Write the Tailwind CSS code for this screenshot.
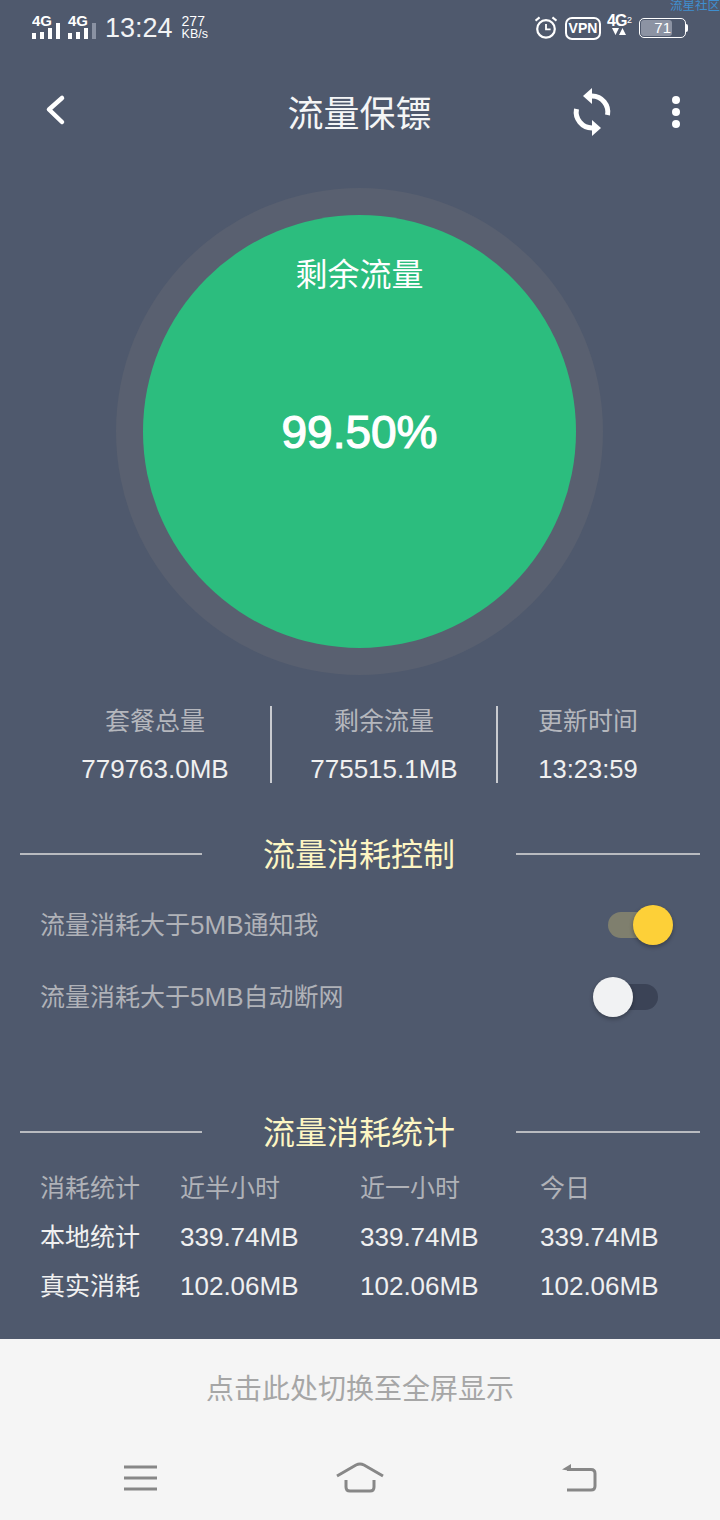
<!DOCTYPE html>
<html lang="zh">
  <head>
    <meta charset="UTF-8" />
    <title>流量保镖</title>
    <script src="https://cdn.jsdelivr.net/npm/@tailwindcss/browser@4"></script>
  </head>
  <body class="w-[720px] h-[1520px] overflow-hidden bg-[#4f596d] font-['Liberation_Sans','Noto_Sans_CJK_SC',sans-serif] text-white flex flex-col">
    <!-- status bar -->
    <div class="relative h-[54px] shrink-0 flex items-center pl-[32px] pr-[32px] pt-[2px]">
      <div class="text-[12.5px] text-[#3f8fd0] absolute right-0 top-[-1px] leading-[14px]">流星社区</div>
      <svg width="64" height="36" viewBox="0 -4 64 36" fill="#fff">
        <text x="0" y="12" font-size="15" font-weight="700" font-family="Liberation Sans">4G</text>
        <rect x="0" y="19" width="4" height="6" /><rect x="8" y="18" width="4" height="7" /><rect x="16" y="14" width="4" height="11" /><rect x="24" y="9" width="4" height="16" />
        <text x="36" y="12" font-size="15" font-weight="700" font-family="Liberation Sans">4G</text>
        <rect x="36" y="19" width="4" height="6" /><rect x="44" y="18" width="4" height="7" /><rect x="52" y="14" width="4" height="11" /><rect x="60" y="9" width="4" height="16" fill="#8a92a3" />
      </svg>
      <span class="ml-[9px] text-[27px] leading-none text-[#f2f3f5]">13:24</span>
      <div class="ml-[9px] flex flex-col text-[12.5px] leading-[13px]"><span class="text-[14px]">277</span><span>KB/s</span></div>
      <div class="ml-auto flex items-center">
        <svg width="22" height="24" viewBox="1 1 24 26" fill="none" stroke="#fff" stroke-width="2.400">
          <circle cx="13" cy="15" r="9.600" /><path d="M13 9.500v6h5" stroke-width="2" /><path d="M1.500 6 6 2.500M24.500 6 20 2.500" />
        </svg>
        <div class="ml-[8px] w-[36px] h-[23px] rounded-[7px] border-2 border-white flex items-center justify-center text-[14px] font-bold">VPN</div>
        <div class="ml-[6px] relative w-[24px] h-[28px]">
          <span class="absolute left-0 top-[-3px] text-[16px] font-bold leading-[20px] tracking-[-1px]">4G</span>
          <span class="absolute right-[-1px] top-[1px] text-[9px] leading-[10px]">2</span>
          <svg class="absolute left-[5px] top-[14px]" width="14" height="7" viewBox="0 0 14 7" fill="#fff"><path d="M0 0h7L3.500 7zM7 7h7L10.500 0z" /></svg>
        </div>
        <div class="ml-[8px] w-[47px] h-[20px] rounded-[5px] border-[1.5px] border-white p-[1px] flex">
          <div class="w-[31px] rounded-[3px] bg-[#8c93a3] flex items-center justify-end pr-[1px] text-[15px]">71</div>
        </div>
        <div class="w-[2px] h-[8px] bg-white rounded-r-sm"></div>
      </div>
    </div>

    <!-- title bar -->
    <div class="relative h-[118px] shrink-0 flex items-center justify-center pt-[3px]">
      <svg class="absolute left-[44px] top-[40px]" width="24" height="32" viewBox="0 0 24 32" fill="none" stroke="#fff" stroke-width="4.500" stroke-linecap="round" stroke-linejoin="round"><path d="M18 4 5 15.500 18 28" /></svg>
      <span class="text-[36px] leading-none text-[#f4f5f6] ml-[-1px]">流量保镖</span>
      <svg class="absolute left-[571px] top-[32px]" width="42" height="52" viewBox="0 0 42 52" fill="none" stroke="#fff" stroke-width="5">
        <path d="M21 10A16 16 0 0 1 36.500 29" /><path d="M21 42A16 16 0 0 1 5.500 23" />
        <path d="M21 2V18L12 10z" fill="#fff" stroke="none" /><path d="M21 34V50L30 42z" fill="#fff" stroke="none" />
      </svg>
      <div class="absolute left-[672px] top-[42px] flex flex-col gap-[4px]">
        <div class="w-[8px] h-[8px] rounded-full bg-white"></div><div class="w-[8px] h-[8px] rounded-full bg-white"></div><div class="w-[8px] h-[8px] rounded-full bg-white"></div>
      </div>
    </div>

    <!-- gauge -->
    <div class="mt-[16px] ml-[116px] w-[487px] h-[487px] shrink-0 rounded-full bg-[#596070] flex items-center justify-center">
      <div class="relative w-[433px] h-[433px] rounded-full bg-[#2cbd7e] flex items-center justify-center">
        <div class="absolute top-[41px] left-0 right-0 text-center text-[32px] leading-[38px]">剩余流量</div>
        <div class="text-[46px] leading-none [-webkit-text-stroke:1.2px_white]">99.50%</div>
      </div>
    </div>

    <!-- totals -->
    <div class="mt-[31px] h-[77px] shrink-0 flex text-center text-[25px] text-[#f0f0f0]">
      <div class="w-[270px] flex flex-col items-center pl-[40px]">
        <span class="text-[#b5b7bd] leading-[30px]">套餐总量</span><span class="mt-[18px] leading-[30px] text-[26px]">779763.0MB</span>
      </div>
      <div class="w-[2px] bg-[#c9cbd0]"></div>
      <div class="w-[224px] flex flex-col items-center">
        <span class="text-[#b5b7bd] leading-[30px]">剩余流量</span><span class="mt-[18px] leading-[30px] text-[26px]">775515.1MB</span>
      </div>
      <div class="w-[2px] bg-[#c9cbd0]"></div>
      <div class="w-[180px] flex flex-col items-center">
        <span class="text-[#b5b7bd] leading-[30px]">更新时间</span><span class="mt-[18px] leading-[30px] text-[25.500px]">13:23:59</span>
      </div>
    </div>

    <!-- consumption control -->
    <div class="mt-[52px] h-[40px] shrink-0 flex items-center pl-[20px] pr-[20px]">
      <div class="w-[182px] h-[2px] bg-[#b9bbc0] mb-[2px]"></div>
      <span class="w-[314px] text-center text-[32px] leading-none text-[#fdf6c3]">流量消耗控制</span>
      <div class="flex-1 h-[2px] bg-[#b9bbc0] mb-[2px]"></div>
    </div>
    <div class="mt-[30px] h-[40px] shrink-0 flex items-center justify-between pl-[40px] pr-[52px] text-[25px] text-[#b0b2b8]">
      <span>流量消耗大于<span class="text-[26px]">5MB</span>通知我</span>
      <div class="relative w-[60px] h-[26px] rounded-full bg-[#7f7f6e]">
        <div class="absolute right-[-5px] top-[-7px] w-[40px] h-[40px] rounded-full bg-[#fdd038] shadow-[0_2px_4px_rgba(0,0,0,0.3)]"></div>
      </div>
    </div>
    <div class="mt-[32px] h-[40px] shrink-0 flex items-center justify-between pl-[40px] pr-[62px] text-[25px] text-[#b0b2b8]">
      <span>流量消耗大于<span class="text-[26px]">5MB</span>自动断网</span>
      <div class="relative w-[60px] h-[26px] rounded-full bg-[#3b4356]">
        <div class="absolute left-[-5px] top-[-7px] w-[40px] h-[40px] rounded-full bg-[#f1f2f3] shadow-[0_2px_4px_rgba(0,0,0,0.3)]"></div>
      </div>
    </div>

    <!-- consumption stats -->
    <div class="mt-[96px] h-[40px] shrink-0 flex items-center pl-[20px] pr-[20px]">
      <div class="w-[182px] h-[2px] bg-[#b9bbc0] mb-[2px]"></div>
      <span class="w-[314px] text-center text-[32px] leading-none text-[#fdf6c3]">流量消耗统计</span>
      <div class="flex-1 h-[2px] bg-[#b9bbc0] mb-[2px]"></div>
    </div>
    <div class="mt-[10px] pl-[40px] grid grid-cols-[140px_180px_180px_140px] grid-rows-[50px_48px_50px] items-center text-[25px] leading-none shrink-0 text-[#f0f0f0]">
      <span class="text-[#b0b2b8]">消耗统计</span><span class="text-[#b0b2b8]">近半小时</span><span class="text-[#b0b2b8]">近一小时</span><span class="text-[#b0b2b8]">今日</span>
      <span>本地统计</span><span class="text-[26px]">339.74MB</span><span class="text-[26px]">339.74MB</span><span class="text-[26px]">339.74MB</span>
      <span>真实消耗</span><span class="text-[26px]">102.06MB</span><span class="text-[26px]">102.06MB</span><span class="text-[26px]">102.06MB</span>
    </div>

    <!-- bottom sheet -->
    <div class="mt-auto h-[181px] shrink-0 bg-[#f5f5f5] flex flex-col items-center">
      <div class="mt-[33px] text-[28px] leading-[36px] text-[#a6a6a6]">点击此处切换至全屏显示</div>
      <div class="relative mt-[51px] w-full h-[40px]">
        <svg class="absolute left-[124px] top-[6px]" width="33" height="28" viewBox="0 0 33 28" fill="none" stroke="#878787" stroke-width="3"><path d="M0 2h33M0 13h33M0 24h33" /></svg>
        <svg class="absolute left-[336px] top-[3px]" width="48" height="32" viewBox="0 0 48 32" fill="none" stroke="#878787" stroke-width="3"><path d="M1 14 20 3q4-2 8 0l19 11" /><path d="M10 18v7q0 4 4 4h20q4 0 4-4v-7" /></svg>
        <svg class="absolute left-[561px] top-[3px]" width="36" height="32" viewBox="0 0 36 32" fill="none" stroke="#878787" stroke-width="3"><path d="M6 7.500h24q4 0 4 4v12.500q0 4-4 4H6" /><path d="M1 7.500 10 2v7z" fill="#878787" stroke="none" /></svg>
      </div>
    </div>
  </body>
</html>
